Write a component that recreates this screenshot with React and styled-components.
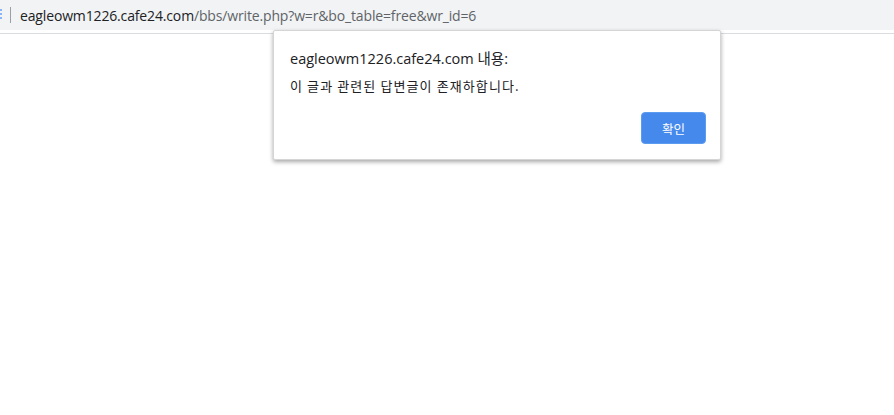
import React from 'react';
import styled, { createGlobalStyle } from 'styled-components';

const GlobalStyle = createGlobalStyle`
  html, body {
    margin: 0;
    padding: 0;
    background: #ffffff;
    font-family: "Noto Sans", "Noto Sans CJK KR", sans-serif;
  }
`;

const Page = styled.div`
  position: relative;
  width: 894px;
  height: 415px;
  overflow: hidden;
  background: #fff;
`;

const Toolbar = styled.div`
  display: flex;
  align-items: center;
  height: 30px;
  background: #f1f3f4;
  border-bottom: 3px solid #fff;
  box-shadow: 0 1px 0 #dadce0;
`;

const SiteIcon = styled.div`
  width: 2px;
  height: 10px;
  margin-top: -2px;
  border-left: 2px dotted #8ab4f8;
`;

const Divider = styled.div`
  width: 1px;
  height: 16px;
  background: #9aa0a6;
  margin: -1px 9px 0 6px;
`;

const Url = styled.div`
  font-family: "Open Sans", "Noto Sans", sans-serif;
  font-size: 14px;
  letter-spacing: -0.15px;
  color: #5f6368;
  white-space: nowrap;
`;

const Host = styled.span`
  color: #202124;
`;

const Dialog = styled.div`
  position: absolute;
  left: 273px;
  top: 30px;
  width: 446px;
  height: 128px;
  background: #fff;
  border: 1px solid #d5d5d5;
  border-radius: 2px;
  box-shadow: 0 2px 4px rgba(0, 0, 0, 0.35);
  display: flex;
  flex-direction: column;
`;

const Body = styled.div`
  padding: 17px 16px 0 16px;
  display: flex;
  flex-direction: column;
  gap: 6px;
`;

const Title = styled.div`
  font-family: "Open Sans", "Noto Sans CJK KR", sans-serif;
  font-size: 14.5px;
  color: #202124;
  line-height: 22px;
`;

const Message = styled.div`
  font-family: "Noto Sans CJK KR", sans-serif;
  font-size: 13px;
  letter-spacing: 1.1px;
  color: #202124;
  line-height: 20px;
`;

const Actions = styled.div`
  display: flex;
  justify-content: flex-end;
  padding: 16px 14px 0 0;
`;

const Button = styled.button`
  width: 65px;
  height: 32px;
  border: 1px solid #5c9cf0;
  border-radius: 4px;
  background: #4689ec;
  color: #fff;
  font-family: "Noto Sans CJK KR", sans-serif;
  font-size: 12.5px;
  padding: 0;
  cursor: pointer;
`;

export default function App() {
  return (
    <>
      <GlobalStyle />
      <Page>
        <Toolbar>
          <SiteIcon />
          <Divider />
          <Url>
            <Host>eagleowm1226.cafe24.com</Host>/bbs/write.php?w=r&amp;bo_table=free&amp;wr_id=6
          </Url>
        </Toolbar>
        <Dialog>
          <Body>
            <Title>eagleowm1226.cafe24.com 내용:</Title>
            <Message>이 글과 관련된 답변글이 존재하합니다.</Message>
          </Body>
          <Actions>
            <Button>확인</Button>
          </Actions>
        </Dialog>
      </Page>
    </>
  );
}
